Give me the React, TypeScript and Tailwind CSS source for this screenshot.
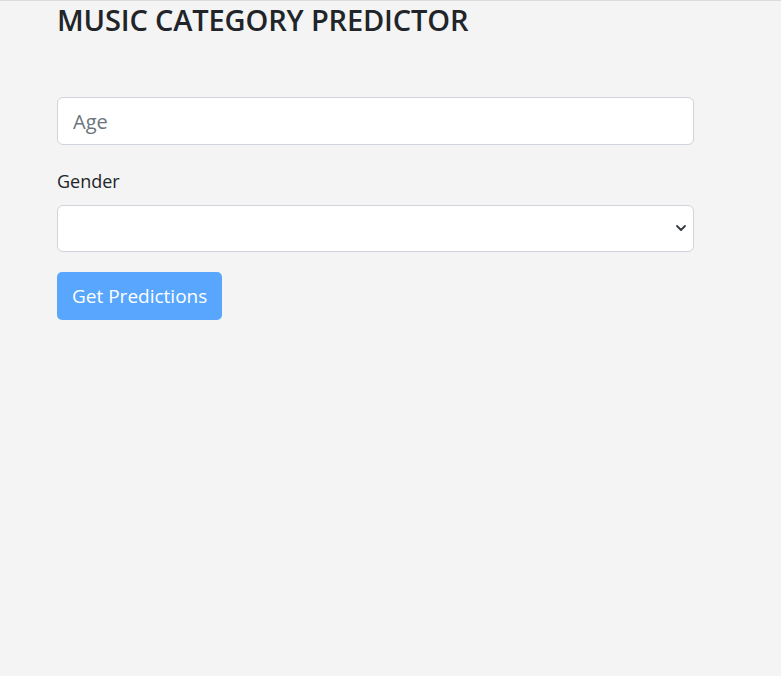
import { ChevronDown } from "lucide-react";

export default function App() {
  return (
    <div className="min-h-[676px] bg-[#f4f4f4] border-t border-[#dcdcdf] font-['Open_Sans',sans-serif] text-[#212529]">
      <div className="w-[637px] ml-[57px]">
        <h2 className="text-[29px] leading-[38px] font-semibold tracking-[-0.15px]">MUSIC CATEGORY PREDICTOR</h2>

        <form className="mt-[58px]" onSubmit={(e) => e.preventDefault()}>
          <input
            type="text"
            placeholder="Age"
            className="w-full h-[48px] px-[15px] text-[20px] bg-white border border-[#ced4da] rounded-[6px] placeholder-[#6c757d] focus:outline-none"
          />

          <label className="block mt-[23px] mb-[10px] text-[18px] leading-[27px]">Gender</label>
          <div className="relative">
            <select className="appearance-none w-full h-[47px] px-[15px] text-[20px] bg-white border border-[#ced4da] rounded-[6px] focus:outline-none">
              <option value=""></option>
              <option>Male</option>
              <option>Female</option>
            </select>
            <ChevronDown size={16} strokeWidth={2.75} className="absolute right-[5px] top-[15px] text-[#343a40] pointer-events-none" />
          </div>

          <button
            type="submit"
            className="mt-[20px] h-[48px] px-[15px] bg-[#58a6fe] text-white text-[19px] rounded-[5px]"
          >
            Get Predictions
          </button>
        </form>
      </div>
    </div>
  );
}
